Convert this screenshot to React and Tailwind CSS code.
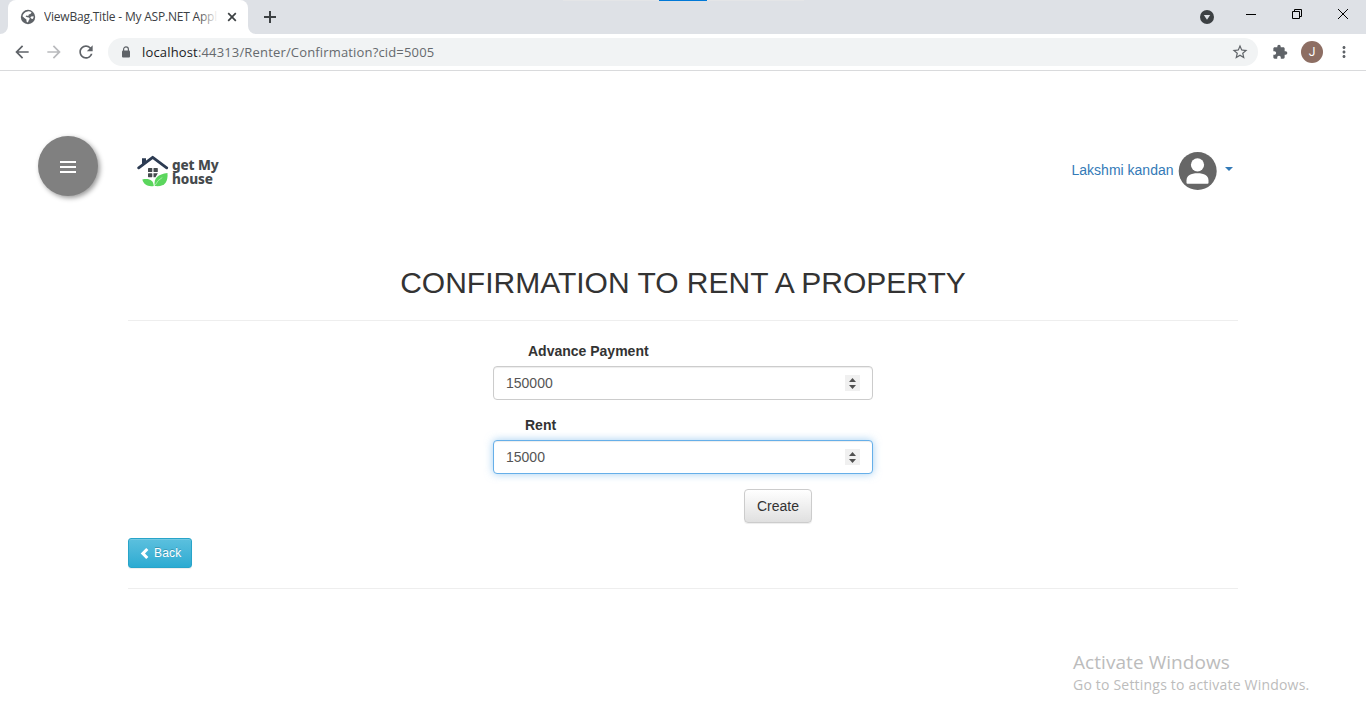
import React from "react";
import {
  MdArrowBack,
  MdArrowForward,
  MdRefresh,
  MdStarBorder,
  MdExtension,
  MdMoreVert,
} from "react-icons/md";

function TabStrip() {
  return (
    <div className="relative flex h-[34px] bg-[#dee1e6]">
      <div className="absolute top-0 left-[563px] h-px w-[241px] bg-[#e4e5e7]" />
      <div className="absolute top-0 left-[659px] h-px w-12 bg-[#0078d7]" />
      <svg className="mt-[26px] h-2 w-2" viewBox="0 0 8 8">
        <path d="M8 0v8H0a8 8 0 0 0 8-8z" fill="#fff" />
      </svg>
      <div className="flex h-full w-60 items-center rounded-t-lg bg-white pl-3">
        <svg className="h-4 w-4" viewBox="0 0 16 16">
          <circle cx="8" cy="8" r="7.200" fill="#5f6368" />
          <path d="M7.600 2.400c1.600-.3 3 .2 4 1L10.400 5 8.800 5.600 8.300 7l-2-.6-.7 1.200 1.600.6 1.700.2.900 1.400-1 1.400-.9 2.300-1.300-.8-.2-2.300-2-1.500-1.900-1.600C2.700 4.800 5 2.800 7.600 2.400z" fill="#fff" />
          <path d="M13.600 7.200l-2.400.2-.9 1.200 1.200 1.100 1.300.4c.6-.8.9-1.900.8-2.900z" fill="#fff" />
        </svg>
        <div className="relative ml-2 w-[174px] overflow-hidden font-['Open_Sans',sans-serif] text-[12px] leading-[18px] tracking-[-0.2px] whitespace-nowrap text-[#3c4043]">
          ViewBag.Title - My ASP.NET Appl
          <div className="absolute inset-y-0 right-0 w-5 bg-linear-to-r from-transparent to-white" />
        </div>
        <svg className="ml-[9px] h-[10px] w-[10px]" viewBox="0 0 10 10">
          <path d="M1.200 1.200l7.600 7.600M8.800 1.200L1.200 8.800" stroke="#3c4043" strokeWidth="1.700" />
        </svg>
      </div>
      <svg className="mt-[26px] h-2 w-2" viewBox="0 0 8 8">
        <path d="M0 0v8h8a8 8 0 0 1-8-8z" fill="#fff" />
      </svg>
      <svg className="mt-[11px] ml-2 h-3 w-3" viewBox="0 0 12 12">
        <path d="M6 0v12M0 6h12" stroke="#3c4043" strokeWidth="2" />
      </svg>
      <div className="flex-1" />
      <svg className="mt-[10px] h-[14px] w-[14px]" viewBox="0 0 14 14">
        <circle cx="7" cy="7" r="7" fill="#3c4043" />
        <path d="M3.800 5h6.400L7 9.800z" fill="#dee1e6" />
      </svg>
      <svg className="mt-[14px] ml-8 h-px w-[10px]" viewBox="0 0 10 1">
        <path d="M0 0h10v1H0z" fill="#000" />
      </svg>
      <svg className="mt-[9px] ml-9 h-[10px] w-[10px]" viewBox="0 0 10 10" fill="none" stroke="#000">
        <path d="M.5 2.500h7v7h-7zM2.500 2V.5h7v7H8" />
      </svg>
      <svg className="mt-[9px] mr-[18px] ml-9 h-[10px] w-[10px]" viewBox="0 0 10 10">
        <path d="M0 0l10 10M10 0L0 10" stroke="#000" />
      </svg>
    </div>
  );
}

function Toolbar() {
  return (
    <div className="flex h-[37px] items-center border-b border-[#d9dadc] bg-white text-[#5f6368]">
      <MdArrowBack className="ml-3 h-5 w-5" />
      <MdArrowForward className="ml-3 h-5 w-5 text-[#b9babd]" />
      <MdRefresh className="ml-3 h-5 w-5" />
      <div className="ml-3 flex h-7 w-[1150px] items-center rounded-full bg-[#f1f3f4] pr-[9px] pl-[13px]">
        <svg className="-mt-px h-3 w-[10px]" viewBox="0 0 10 12">
          <path d="M2.600 5V3.300a2.400 2.400 0 0 1 4.800 0V5" fill="none" stroke="#5f6368" strokeWidth="1.200" />
          <rect x="1" y="4.500" width="8" height="7" rx="1" fill="#5f6368" />
        </svg>
        <div className="ml-[11px] flex-1 font-['Open_Sans',sans-serif] text-[13px] leading-5 tracking-[0.16px] text-[#666a6e]">
          <span className="text-[#202124]">localhost</span>
          :44313/Renter/Confirmation?cid=5005
        </div>
        <MdStarBorder className="h-[18px] w-[18px]" />
      </div>
      <MdExtension className="ml-[14px] h-4 w-4" />
      <div className="ml-[13px] flex h-[22px] w-[22px] items-center justify-center rounded-full bg-[#8d6e63] font-[Roboto,sans-serif] text-[12px] text-white">
        J
      </div>
      <MdMoreVert className="ml-3 h-[18px] w-[18px]" />
    </div>
  );
}

function Logo() {
  return (
    <div className="ml-[39px] flex h-8 w-[84px]">
      <svg className="h-8 w-8" viewBox="0 0 32 32">
        <path d="M5 9.500V3.300h4v3z" fill="#2c3b52" />
        <path d="M1.700 12.800L15.700 2.300l14 10.500" fill="none" stroke="#2c3b52" strokeWidth="2.800" strokeLinecap="round" strokeLinejoin="round" />
        <g fill="#454a4d">
          <rect x="11" y="13" width="4.300" height="4" rx=".6" />
          <rect x="16.500" y="13" width="4.300" height="4" rx=".6" />
          <rect x="11" y="18.200" width="4.300" height="4" rx=".6" />
          <path d="M16.500 18.200h4.300l-2.300 4h-2z" />
        </g>
        <path d="M5.300 24.500c7-1.300 11 .5 11.500 6.500-6 .8-9.800-1-11.500-6.500z" fill="#5bd65d" />
        <path d="M30.500 18c.6 9-2.600 14-12.700 13C16.300 23 21 19.300 30.500 18z" fill="#5bd65d" />
        <path d="M18.300 30q2-4.800 7-7.500" fill="none" stroke="#b5efb6" strokeWidth=".8" />
      </svg>
      <div className="ml-[3px] pt-1 font-['Noto_Sans',sans-serif] text-[13.500px] leading-[13.500px] font-extrabold tracking-[-0.1px] whitespace-nowrap text-[#454a4d]">
        <div>get My</div>
        <div>house</div>
      </div>
    </div>
  );
}

function Header() {
  return (
    <header className="flex h-[66px] pl-[38px]">
      <button className="flex h-[60px] w-[60px] items-center justify-center rounded-full bg-[#808080] shadow-[2px_2px_5px_#999]">
        <svg className="mt-[2px] h-3 w-4" viewBox="0 0 16 12">
          <path d="M0 0h16v2H0zM0 5h16v2H0zM0 10h16v2H0z" fill="#fff" />
        </svg>
      </button>
      <div className="pt-[19px]">
        <Logo />
      </div>
      <div className="mr-[133px] ml-auto flex items-center pt-1 font-['Liberation_Sans',sans-serif] text-[14px] text-[#337ab7]">
        <span className="-mt-[2px]">Lakshmi kandan</span>
        <svg className="ml-1 h-[39px] w-[39px]" viewBox="0 0 39 39">
          <circle cx="19.700" cy="19" r="19" fill="#666" />
          <circle cx="19.500" cy="12.800" r="6.600" fill="#fff" />
          <path d="M8.500 30.700v-2.200c0-5 4.300-7.300 11-7.300s11 2.300 11 7.300v2.200q0 1-1 1h-20q-1 0-1-1z" fill="#fff" />
        </svg>
        <svg className="mt-[-4px] ml-[8.500px] h-1 w-2" viewBox="0 0 8 4">
          <path d="M0 0h8L4 4z" fill="#337ab7" />
        </svg>
      </div>
    </header>
  );
}

function NumberField({ label, value, labelClass, inputClass }) {
  return (
    <div className="mb-[15px]">
      <div className={`mb-[5px] text-[14px] leading-5 font-bold ${labelClass}`}>{label}</div>
      <div className={`flex h-[34px] items-center justify-between rounded border bg-white px-3 text-[14px] text-[#555] ${inputClass}`}>
        <span>{value}</span>
        <span className="flex h-4 w-[15px] items-center justify-center bg-[#f0f0f0]">
          <svg className="h-[11px] w-[7px]" viewBox="0 0 7 11">
            <path d="M0 4L3.500 0 7 4zM0 7l3.500 4L7 7z" fill="#505050" />
          </svg>
        </span>
      </div>
    </div>
  );
}

export default function App() {
  return (
    <div className="relative h-[728px] w-[1366px] overflow-hidden bg-white font-['Liberation_Sans',sans-serif] text-[#333]">
      <TabStrip />
      <Toolbar />
      <div className="pt-[65px]">
        <Header />
        <main className="mx-auto w-[1110px] pt-16">
          <h2 className="text-center text-[30px] leading-[33px] whitespace-nowrap">CONFIRMATION TO RENT A PROPERTY</h2>
          <hr className="mt-[21px] border-[#eee]" />
          <form className="mx-auto mt-5 w-[380px]">
            <NumberField
              label="Advance Payment"
              value="150000"
              labelClass="pl-[35px]"
              inputClass="border-[#ccc] shadow-[inset_0_1px_1px_rgba(0,0,0,0.075)]"
            />
            <NumberField
              label="Rent"
              value="15000"
              labelClass="pl-8"
              inputClass="border-[#66afe9] shadow-[inset_0_1px_1px_rgba(0,0,0,0.075),0_0_8px_rgba(102,175,233,0.6)]"
            />
            <button
              type="button"
              className="ml-[251px] block h-[34px] w-[68px] rounded border border-[#ccc] bg-linear-to-b from-white to-[#e0e0e0] text-[14px] leading-5 shadow-[inset_0_1px_0_rgba(255,255,255,0.15),0_1px_1px_rgba(0,0,0,0.075)]"
            >
              Create
            </button>
          </form>
          <button className="mt-[15px] flex h-[30px] w-16 items-center rounded-[3px] border border-[#28a4c9] bg-linear-to-b from-[#5bc0de] to-[#2aabd2] pl-[11px] text-[12px] text-white shadow-[inset_0_1px_0_rgba(255,255,255,0.15),0_1px_1px_rgba(0,0,0,0.075)] [text-shadow:0_-1px_0_rgba(0,0,0,0.2)]">
            <svg className="h-[11px] w-[9px]" viewBox="0 0 9 11">
              <path d="M6.200 0l2.200 2.100L5 5.500l3.400 3.400L6.200 11 .7 5.500z" fill="#fff" />
            </svg>
            <span className="ml-[5px] tracking-[0.15px]">Back</span>
          </button>
          <hr className="mt-5 border-[#eee]" />
        </main>
      </div>
      <div className="absolute top-[650px] left-[1073px] font-['Open_Sans',sans-serif] whitespace-nowrap text-[#bcbcbc]">
        <div className="text-[19px] leading-6 tracking-[0.06px]">Activate Windows</div>
        <div className="text-[14px] leading-[22px] tracking-[0.2px]">Go to Settings to activate Windows.</div>
      </div>
    </div>
  );
}
